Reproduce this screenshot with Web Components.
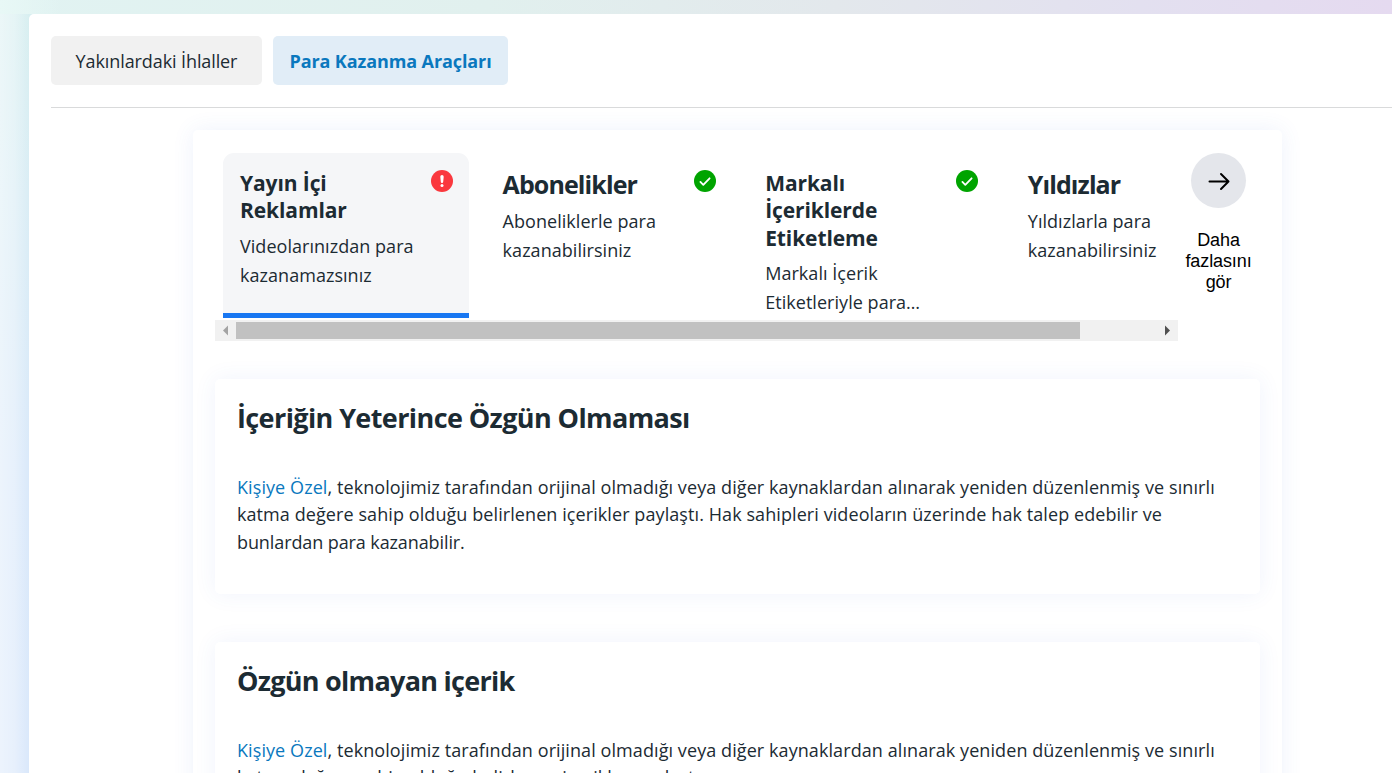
<!DOCTYPE html>
<html lang="tr">
<head>
<meta charset="utf-8">
<title>Para Kazanma Araçları</title>
<style>
    html, body { margin: 0; height: 100%; overflow: hidden; }
    body { font-family: "Open Sans", "Noto Sans", sans-serif; color: #1c2b33; }
</style>
</head>
<body>
<support-page>
    <tab-button slot="tabs">Yakınlardaki İhlaller</tab-button>
    <tab-button slot="tabs" active>Para Kazanma Araçları</tab-button>
    <tool-carousel>
        <tool-card selected status="error">
            <span slot="title">Yayın İçi<br>Reklamlar</span>
            Videolarınızdan para<br>kazanamazsınız
        </tool-card>
        <tool-card large status="ok">
            <span slot="title">Abonelikler</span>
            Aboneliklerle para<br>kazanabilirsiniz
        </tool-card>
        <tool-card status="ok">
            <span slot="title">Markalı<br>İçeriklerde<br>Etiketleme</span>
            Markalı İçerik<br>Etiketleriyle para…
        </tool-card>
        <tool-card large>
            <span slot="title">Yıldızlar</span>
            Yıldızlarla para<br>kazanabilirsiniz
        </tool-card>
        <more-button slot="more">Daha<br>fazlasını<br>gör</more-button>
    </tool-carousel>
    <violation-card heading="İçeriğin Yeterince Özgün Olmaması">
        <a>Kişiye Özel</a>, teknolojimiz tarafından orijinal olmadığı veya diğer kaynaklardan alınarak yeniden düzenlenmiş ve sınırlı<br>katma değere sahip olduğu belirlenen içerikler paylaştı. Hak sahipleri videoların üzerinde hak talep edebilir ve<br><span>bunlardan para kazanabilir.</span>
    </violation-card>
    <violation-card heading="Özgün olmayan içerik">
        <a>Kişiye Özel</a>, teknolojimiz tarafından orijinal olmadığı veya diğer kaynaklardan alınarak yeniden düzenlenmiş ve sınırlı<br>katma değere sahip olduğu belirlenen içerikler paylaştı.
    </violation-card>
</support-page>

<script>
class SupportPage extends HTMLElement {
    constructor() {
        super();
        this.attachShadow({ mode: "open" });
        this.shadowRoot.innerHTML = `
            <style>
                :host {
                    display: block;
                    box-sizing: border-box;
                    height: 100%;
                    padding: 14px 0 0 29px;
                    overflow: hidden;
                    background:
                        linear-gradient(90deg, #e8f8f6 0, rgba(226,243,242,0) 60px) 0 0 / 60px 14px no-repeat,
                        linear-gradient(90deg, #e1f3f2 0, #e1f0ee 35%, #e3e8ec 60%, #e3e0f0 82%, #e5daf0 100%) 0 0 / 100% 14px no-repeat,
                        linear-gradient(90deg, rgba(255,255,255,.5) 0, rgba(255,255,255,.35) 50%, rgba(255,255,255,0)) 0 0 / 29px 100% no-repeat,
                        linear-gradient(180deg, #d8eff0 0, #daedf5 25%, #dae9fa 60%, #dae8fb 100%);
                }
                .panel {
                    box-sizing: border-box;
                    height: 900px;
                    padding: 22px 0 0 22px;
                    background: #fff;
                    border-radius: 5px 0 0 0;
                }
                .tabs {
                    display: flex;
                    gap: 11px;
                    height: 49px;
                    padding-bottom: 22px;
                    border-bottom: 1px solid #d9dadb;
                }
                .card {
                    display: flex;
                    flex-direction: column;
                    box-sizing: border-box;
                    width: 1089px;
                    height: 900px;
                    margin: 22px 0 0 142px;
                    padding: 23px 22px;
                    background: #fff;
                    border-radius: 5px;
                    box-shadow: 0 0 22px rgba(70, 110, 220, .09);
                }
            </style>
            <div class="panel">
                <div class="tabs"><slot name="tabs"></slot></div>
                <div class="card"><slot></slot></div>
            </div>
        `;
    }
}

class TabButton extends HTMLElement {
    constructor() {
        super();
        this.attachShadow({ mode: "open" });
        this.shadowRoot.innerHTML = `
            <style>
                :host {
                    display: flex;
                    align-items: center;
                    justify-content: center;
                    width: 211px;
                    height: 49px;
                    border-radius: 5px;
                    background: #f1f1f1;
                    font-size: 18px;
                    letter-spacing: -.1px;
                    white-space: nowrap;
                    cursor: pointer;
                }
                :host([active]) {
                    width: 235px;
                    background: #e1edf7;
                    color: #0a78be;
                    font-weight: 700;
                }
            </style>
            <span><slot></slot></span>
        `;
    }
}

class ToolCarousel extends HTMLElement {
    constructor() {
        super();
        this.attachShadow({ mode: "open" });
        this.shadowRoot.innerHTML = `
            <style>
                :host { display: flex; flex: none; }
                .scroller { width: 963px; }
                .items {
                    display: flex;
                    gap: 16.6px;
                    height: 165px;
                    padding: 0 0 2px 8px;
                    overflow: hidden;
                }
                .bar {
                    display: flex;
                    align-items: center;
                    height: 21px;
                    background: #f1f1f1;
                }
                .bar svg { width: 21px; height: 21px; flex: none; }
                .thumb { width: 844px; height: 17px; background: #c1c1c1; }
                .space { flex: 1; }
                .more { margin-left: 4px; }
            </style>
            <div class="scroller">
                <div class="items"><slot></slot></div>
                <div class="bar">
                    <svg viewBox="0 0 21 21"><path d="M8 10.5l5-5v10z" fill="#a3a3a3"/></svg>
                    <div class="thumb"></div>
                    <div class="space"></div>
                    <svg viewBox="0 0 21 21"><path d="M13 10.5l-5-5v10z" fill="#505050"/></svg>
                </div>
            </div>
            <div class="more"><slot name="more"></slot></div>
        `;
    }
}

const STATUS_ICONS = {
    error: `
        <svg viewBox="0 0 22 22">
            <circle cx="11" cy="11" r="11" fill="#fa383e"/>
            <path d="M9.3 6.7a1.7 1.7 0 0 1 3.4 0l-.5 5.1a1.2 1.2 0 0 1-2.4 0z" fill="#fff"/>
            <circle cx="11" cy="15.4" r="1.5" fill="#fff"/>
        </svg>`,
    ok: `
        <svg viewBox="0 0 22 22">
            <circle cx="11" cy="11" r="11" fill="#00a400"/>
            <path d="M6.4 11.9l2.9 2.9 6.3-6.5" fill="none" stroke="#fff" stroke-width="1.8" stroke-linecap="round" stroke-linejoin="round"/>
        </svg>`,
};

class ToolCard extends HTMLElement {
    constructor() {
        super();
        this.attachShadow({ mode: "open" });
        this.shadowRoot.innerHTML = `
            <style>
                :host {
                    display: flex;
                    flex: none;
                    justify-content: space-between;
                    box-sizing: border-box;
                    width: 246px;
                    height: 165px;
                    padding: 17px 16px 0 17px;
                    border-radius: 11px 11px 0 0;
                }
                :host([selected]) {
                    background: #f5f6f8;
                    border-bottom: 5px solid #1877f2;
                }
                .text { white-space: nowrap; }
                .title {
                    font-size: 21px;
                    font-weight: 700;
                    line-height: 27.4px;
                    letter-spacing: -.1px;
                }
                :host([large]) .title {
                    padding-bottom: 2px;
                    font-size: 25px;
                    line-height: 28px;
                    letter-spacing: -.9px;
                }
                .desc {
                    margin-top: 6.8px;
                    font-size: 18px;
                    line-height: 29px;
                    letter-spacing: .04px;
                }
                :host([large]) .desc { margin-top: 7.2px; }
                svg { display: block; width: 22px; height: 22px; }
            </style>
            <div class="text">
                <div class="title"><slot name="title"></slot></div>
                <div class="desc"><slot></slot></div>
            </div>
            <div class="icon"></div>
        `;
    }

    connectedCallback() {
        this.shadowRoot.querySelector(".icon").innerHTML = STATUS_ICONS[this.getAttribute("status")] || "";
    }
}

class MoreButton extends HTMLElement {
    constructor() {
        super();
        this.attachShadow({ mode: "open" });
        this.shadowRoot.innerHTML = `
            <style>
                :host {
                    display: flex;
                    flex-direction: column;
                    align-items: center;
                    gap: 22px;
                    width: 73px;
                    color: #000;
                    font: 18px/21px "Liberation Sans", sans-serif;
                    letter-spacing: -.1px;
                    text-align: center;
                }
                .circle {
                    display: flex;
                    align-items: center;
                    justify-content: center;
                    width: 55px;
                    height: 55px;
                    border-radius: 50%;
                    background: #e4e6eb;
                }
                svg { width: 22px; height: 20px; }
            </style>
            <div class="circle">
                <svg viewBox="0 0 22 20" fill="none" stroke="#000" stroke-width="2" stroke-linecap="round" stroke-linejoin="round">
                    <path d="M1.5 10.5h19M13 3l7.5 7.5L13 18"/>
                </svg>
            </div>
            <div><slot></slot></div>
        `;
    }
}

class ViolationCard extends HTMLElement {
    constructor() {
        super();
        this.attachShadow({ mode: "open" });
        this.shadowRoot.innerHTML = `
            <style>
                :host {
                    display: block;
                    flex: none;
                    box-sizing: border-box;
                    height: 215px;
                    margin-top: 38px;
                    padding: 21px 22px 0;
                    border-radius: 5px;
                    background: #fff;
                    box-shadow: 0 0 22px rgba(70, 100, 220, .08);
                }
                :host(:nth-of-type(n+2)) { margin-top: 48px; }
                h2 {
                    margin: 0;
                    font-size: 27px;
                    font-weight: 700;
                    line-height: 36px;
                    letter-spacing: -.6px;
                    white-space: nowrap;
                }
                :host(:nth-of-type(n+2)) h2 { letter-spacing: -.72px; }
                .body {
                    margin-top: 38px;
                    font-size: 18px;
                    line-height: 27.4px;
                    letter-spacing: .082px;
                    white-space: nowrap;
                }
                ::slotted(a) { color: #0a78be; }
                ::slotted(span) { letter-spacing: -.1px; }
            </style>
            <h2></h2>
            <div class="body"><slot></slot></div>
        `;
    }

    connectedCallback() {
        this.shadowRoot.querySelector("h2").textContent = this.getAttribute("heading");
    }
}

customElements.define("support-page", SupportPage);
customElements.define("tab-button", TabButton);
customElements.define("tool-carousel", ToolCarousel);
customElements.define("tool-card", ToolCard);
customElements.define("more-button", MoreButton);
customElements.define("violation-card", ViolationCard);
</script>
</body>
</html>
